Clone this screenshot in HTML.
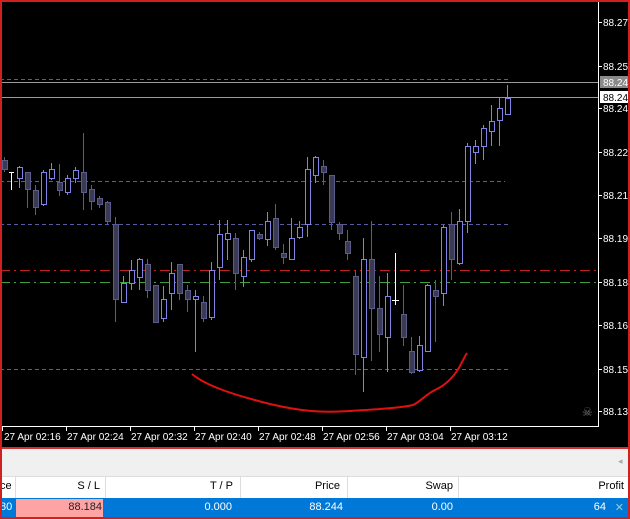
<!DOCTYPE html>
<html><head><meta charset="utf-8"><style>
body{margin:0;width:630px;height:519px;overflow:hidden;background:#000;font-family:"Liberation Sans",sans-serif;position:relative}
.t{position:absolute;font-size:11px;white-space:nowrap}
</style></head><body>
<svg width="630" height="450" style="position:absolute;left:0;top:0" shape-rendering="crispEdges">
<rect width="630" height="450" fill="#000"/>
<g stroke="#5a5aa0" stroke-dasharray="4,3">
<line x1="0" y1="79.5" x2="510" y2="79.5"/>
<line x1="0" y1="181.5" x2="505" y2="181.5"/>
<line x1="0" y1="224.5" x2="510" y2="224.5"/>
<line x1="0" y1="369.5" x2="510" y2="369.5"/>
</g>
<line x1="0" y1="270.5" x2="597" y2="270.5" stroke="#c02020" stroke-dasharray="10,4,2,4"/>
<line x1="0" y1="282.5" x2="597" y2="282.5" stroke="#40a040" stroke-dasharray="10,4,2,4"/>
<line x1="0" y1="82.5" x2="598" y2="82.5" stroke="#9a9a9a"/>
<line x1="0" y1="97.5" x2="598" y2="97.5" stroke="#9a9a9a"/>
<g id="c"></g>
<g stroke="#fff"><line x1="11.5" y1="172" x2="11.5" y2="190"/><line x1="9" y1="172.5" x2="14" y2="172.5"/>
<line x1="395.5" y1="253" x2="395.5" y2="305"/><line x1="392" y1="300.5" x2="399" y2="300.5"/></g>
<path d="M192,374 C205,385 230,394 270,404 C300,411 320,413 350,411 C380,409 400,408 413,405 C420,402 425,395 435,390 C448,384 455,375 460,366 C463,360 465,356 467,353" fill="none" stroke="#e01010" stroke-width="2" shape-rendering="auto"/>
<line x1="598.5" y1="0" x2="598.5" y2="427" stroke="#fff"/>
<line x1="0" y1="426.5" x2="599" y2="426.5" stroke="#fff"/>
<g stroke="#fff"><line x1="599" y1="22.5" x2="602" y2="22.5"/><line x1="599" y1="66.5" x2="602" y2="66.5"/><line x1="599" y1="108.5" x2="602" y2="108.5"/><line x1="599" y1="152.5" x2="602" y2="152.5"/><line x1="599" y1="195.5" x2="602" y2="195.5"/><line x1="599" y1="238.5" x2="602" y2="238.5"/><line x1="599" y1="282.5" x2="602" y2="282.5"/><line x1="599" y1="325.5" x2="602" y2="325.5"/><line x1="599" y1="369.5" x2="602" y2="369.5"/><line x1="599" y1="411.5" x2="602" y2="411.5"/>
<line x1="2.5" y1="427" x2="2.5" y2="431"/><line x1="66.5" y1="427" x2="66.5" y2="431"/><line x1="130.5" y1="427" x2="130.5" y2="431"/><line x1="194.5" y1="427" x2="194.5" y2="431"/><line x1="258.5" y1="427" x2="258.5" y2="431"/><line x1="322.5" y1="427" x2="322.5" y2="431"/><line x1="386.5" y1="427" x2="386.5" y2="431"/><line x1="450.5" y1="427" x2="450.5" y2="431"/></g>
<rect x="600" y="76" width="30" height="12" fill="#8a8a8a"/>
<rect x="600" y="91" width="30" height="12" fill="#fff"/>
<g font-family="Liberation Sans,sans-serif" font-size="10" fill="#fff">
<text x="603" y="26">88.270</text><text x="603" y="70">88.255</text><text x="603" y="86">88.249</text>
<text x="603" y="101" fill="#000">88.244</text><text x="603" y="112">88.240</text><text x="603" y="156">88.225</text><text x="603" y="199">88.210</text><text x="603" y="242">88.195</text><text x="603" y="286">88.180</text><text x="603" y="329">88.165</text><text x="603" y="373">88.150</text><text x="603" y="415">88.135</text>
<text x="4" y="440">27 Apr 02:16</text><text x="67" y="440">27 Apr 02:24</text><text x="131" y="440">27 Apr 02:32</text><text x="195" y="440">27 Apr 02:40</text><text x="259" y="440">27 Apr 02:48</text><text x="323" y="440">27 Apr 02:56</text><text x="387" y="440">27 Apr 03:04</text><text x="451" y="440">27 Apr 03:12</text>
</g>
<text x="582" y="416" font-size="12" fill="#777">☠</text>
<rect x="0" y="447" width="630" height="2" fill="#d03030"/>
</svg>
<div style="position:absolute;left:0;top:449px;width:630px;height:27px;background:#f0f0f0"></div>
<div class="t" style="left:618px;top:456px;color:#aaa;font-size:9px">◂</div>
<div style="position:absolute;left:0;top:476px;width:630px;height:22px;background:#fff;border-top:1px solid #ddd"></div>
<div style="position:absolute;left:15px;top:476px;width:1px;height:22px;background:#ddd"></div>
<div style="position:absolute;left:105px;top:476px;width:1px;height:22px;background:#ddd"></div>
<div style="position:absolute;left:240px;top:476px;width:1px;height:22px;background:#ddd"></div>
<div style="position:absolute;left:347px;top:476px;width:1px;height:22px;background:#ddd"></div>
<div style="position:absolute;left:458px;top:476px;width:1px;height:22px;background:#ddd"></div>
<div class="t" style="left:0;top:480px">ce</div>
<div class="t" style="right:530px;top:480px">S / L</div>
<div class="t" style="right:397px;top:480px">T / P</div>
<div class="t" style="right:290px;top:480px">Price</div>
<div class="t" style="right:177px;top:480px">Swap</div>
<div class="t" style="right:6px;top:480px">Profit</div>
<div style="position:absolute;left:0;top:498px;width:630px;height:21px;background:#0078d7"></div>
<div style="position:absolute;left:16px;top:499px;width:87px;height:19px;background:#ffa4a4"></div>
<div class="t" style="left:0;top:501px;color:#fff">80</div>
<div class="t" style="right:528px;top:501px;color:#222">88.184</div>
<div class="t" style="right:398px;top:501px;color:#fff">0.000</div>
<div class="t" style="right:287px;top:501px;color:#fff">88.244</div>
<div class="t" style="right:177px;top:501px;color:#fff">0.00</div>
<div class="t" style="right:24px;top:501px;color:#fff">64</div>
<div class="t" style="right:6px;top:501px;color:#9cc">✕</div>
<div style="position:absolute;left:0;top:0;width:626px;height:515px;border:2px solid #d02020;pointer-events:none"></div>
<script>
var d=[[4,160,169,157,172,0],[19,167,178,166,188,1],[27,172,189,172,208,0],[35,190,207,185,215,0],[43,172,204,170,206,1],[51,169,178,163,180,1],[59,182,190,164,196,0],[67,178,192,175,195,1],[75,170,178,167,183,1],[83,172,192,133,210,0],[91,189,201,185,210,0],[99,198,204,196,208,0],[107,202,221,201,224,0],[115,224,299,217,322,0],[123,283,302,276,302,1],[131,270,283,260,290,1],[139,259,277,258,290,1],[147,264,290,259,298,0],[155,285,322,285,322,0],[163,299,318,286,322,1],[171,273,293,262,310,1],[179,264,293,264,300,0],[187,290,299,285,312,0],[195,296,299,290,352,1],[203,302,318,296,322,0],[211,270,317,262,320,1],[219,234,267,220,280,1],[227,233,239,220,260,1],[235,238,273,233,290,0],[243,257,276,250,287,1],[251,230,259,230,262,1],[259,234,238,232,240,0],[267,221,239,212,246,1],[275,218,247,204,250,0],[283,253,257,244,264,0],[291,238,259,218,260,1],[299,227,237,221,239,1],[307,169,224,157,237,1],[315,157,175,156,183,1],[323,166,172,160,185,0],[331,175,222,175,230,0],[339,224,233,222,240,0],[347,241,253,230,260,0],[355,276,354,270,375,0],[363,259,357,238,392,1],[371,259,308,221,361,0],[379,308,334,276,352,0],[387,296,337,273,372,1],[403,314,337,285,346,0],[411,351,372,337,374,0],[419,345,370,336,372,1],[427,285,351,284,351,1],[435,290,296,280,342,0],[443,227,293,225,306,1],[451,224,259,212,280,0],[459,221,263,209,265,1],[467,146,221,143,233,1],[475,146,152,140,164,1],[483,128,146,125,160,1],[491,121,131,105,146,1],[499,108,120,97,146,1],[507,98,114,85,114,1]];
var s='';d.forEach(function(c){var col=c[5]?'#8282e6':'#5c5c8c';s+='<line x1="'+(c[0]+.5)+'" x2="'+(c[0]+.5)+'" y1="'+c[3]+'" y2="'+c[4]+'" stroke="'+col+'"/>';s+='<rect x="'+(c[0]-2+.5)+'" y="'+(c[1]+.5)+'" width="5" height="'+Math.max(1,c[2]-c[1])+'" fill="'+(c[5]?'#000':'#3a3a52')+'" stroke="'+col+'"/>';});
document.getElementById('c').innerHTML=s;
</script>
</body></html>
